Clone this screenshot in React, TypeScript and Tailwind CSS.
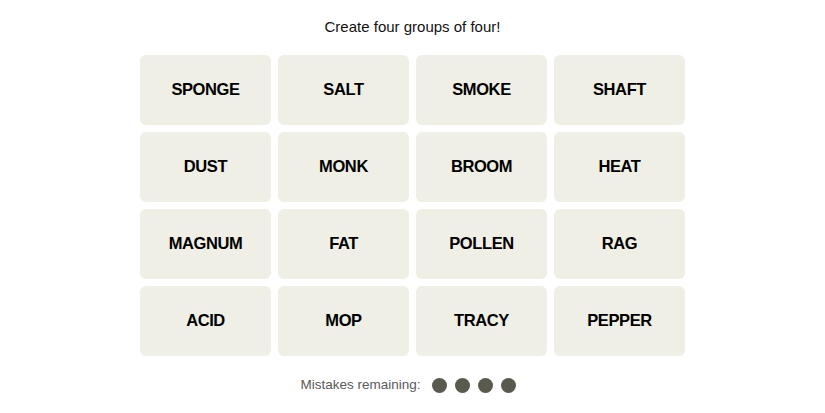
import React from "react";

const words = [
  "SPONGE", "SALT", "SMOKE", "SHAFT",
  "DUST", "MONK", "BROOM", "HEAT",
  "MAGNUM", "FAT", "POLLEN", "RAG",
  "ACID", "MOP", "TRACY", "PEPPER",
];

export default function App() {
  return (
    <div className="w-[825px] h-[413px] bg-white flex flex-col items-center font-['Liberation_Sans',Arial,sans-serif]">
      {/* Heading */}
      <p className="mt-[17px] h-[20px] text-[15px] leading-[20px] text-[#121212]">
        Create four groups of four!
      </p>

      {/* Board */}
      <div className="mt-[18px] grid grid-cols-[repeat(4,131px)] grid-rows-[repeat(4,70px)] gap-[7px]">
        {words.map((w) => (
          <button
            key={w}
            className="rounded-[6px] bg-[#efefe6] flex items-center justify-center pb-[2px] text-[16.5px] tracking-[-0.4px] font-bold text-black uppercase"
          >
            {w}
          </button>
        ))}
      </div>

      {/* Mistakes */}
      <div className="mt-[19px] mr-[9px] flex items-center gap-[11px]">
        <span className="text-[13.5px] text-[#5a5a5a]">Mistakes remaining:</span>
        <div className="flex gap-[8px]">
          {[0, 1, 2, 3].map((i) => (
            <span key={i} className="w-[15px] h-[15px] rounded-full bg-[#5a594e]" />
          ))}
        </div>
      </div>
    </div>
  );
}
